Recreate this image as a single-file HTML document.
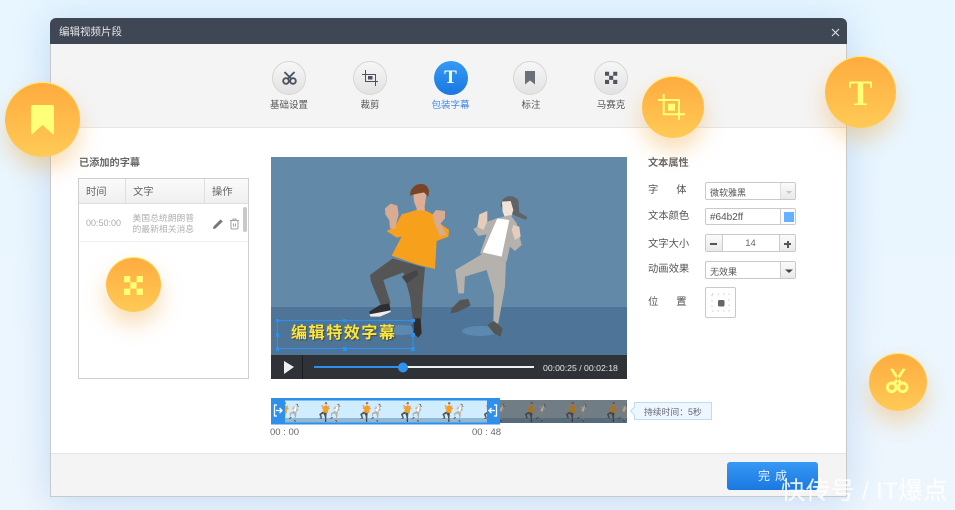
<!DOCTYPE html>
<html>
<head>
<meta charset="utf-8">
<style>
html,body{margin:0;padding:0}
body{width:955px;height:510px;position:relative;overflow:hidden;background:linear-gradient(180deg,#e7f6ff 0%,#ecf6fe 70%,#eef6fd 100%);font-family:"Liberation Sans","Noto Sans CJK SC",sans-serif;color:#555}
.a{position:absolute;white-space:nowrap}
#win{position:absolute;left:50px;top:18px;width:797px;height:479px;border-radius:6px 6px 3px 3px;background:#fff;box-shadow:0 4px 36px rgba(110,160,220,.32)}
#frame{position:absolute;left:50px;top:44px;width:795px;height:452px;border:1px solid #c8c9cb;border-top:0;pointer-events:none}
.tool{position:absolute;top:61px;width:32px;height:32px;border:1px solid #d6d6d6;border-radius:50%;background:linear-gradient(180deg,#f7f7f7,#e2e2e2)}
.tool svg,.bd svg{position:absolute;left:0;top:0;width:100%;height:100%}
.tl{position:absolute;top:98.5px;width:80px;text-align:center;font-size:9.5px;line-height:14px;color:#555}
.bd{position:absolute;border-radius:50%;background:linear-gradient(180deg,#ffab3f,#ffca55);box-shadow:inset 0 1px 0 #fff06a,0 12px 22px rgba(240,165,60,.38)}
.lb{position:absolute;left:648px;font-size:10.3px;line-height:14px;color:#555}
.inp{position:absolute;left:705px;width:89px;height:16px;border:1px solid #c9c9c9;border-radius:2px;background:#fff;font-size:9px;line-height:16px;color:#555}
.inp i{font-style:normal;position:absolute;left:4px;top:1.5px}
.sb{position:absolute;top:0;bottom:0;background:linear-gradient(180deg,#fbfbfb,#e9e9e9)}
.h{position:absolute;width:3.5px;height:3.5px;background:#2e8fec}
</style>
</head>
<body>
<div id="win"></div>
<div class="a" style="left:51px;top:44px;width:795px;height:83px;background:#f4f4f4;border-bottom:1px solid #e6e6e6"></div>
<div class="a" style="left:51px;top:453px;width:795px;height:43px;background:#f4f4f4;border-top:1px solid #e6e6e6"></div>
<div id="frame"></div>
<div class="a" style="left:50px;top:18px;width:797px;height:26px;background:#3f4654;border-radius:6px 6px 0 0"></div>
<div class="a" style="left:59px;top:24.5px;font-size:10.5px;line-height:15px;color:#e6e7e9">编辑视频片段</div>
<svg class="a" style="left:830.5px;top:27.5px" width="9" height="9" viewBox="0 0 9 9"><path d="M1 1L8 8M8 1L1 8" stroke="#dcdcdc" stroke-width="1.2"/></svg>

<div class="tool" style="left:272px"><svg viewBox="0 0 32 32"><g fill="none" stroke="#4a5260" stroke-width="1.900"><circle cx="13" cy="19" r="2.800"/><circle cx="20" cy="19" r="2.800"/><path d="M11.500 10L18.500 17M21.500 10L14.500 17"/></g></svg></div>
<div class="tool" style="left:353px"><svg viewBox="0 0 32 32"><g fill="none" stroke="#4a5260" stroke-width="1"><path d="M11.500 8V19.500H24M8 12.500H21.500V24"/></g><rect x="14" y="14" width="4.500" height="3.500" fill="#4a5260"/></svg></div>
<div class="a" style="left:433.5px;top:61px;width:34px;height:34px;border-radius:50%;background:linear-gradient(180deg,#359af6,#1a78e0)"></div>
<div class="a" style="left:433.5px;top:63.5px;width:34px;text-align:center;font:bold 19px/28px 'Liberation Serif',serif;color:#fff">T</div>
<div class="tool" style="left:513px"><svg viewBox="0 0 32 32"><path d="M11 9H21V22.500L16 18.500L11 22.500Z" fill="#6b7078"/></svg></div>
<div class="tool" style="left:594px"><svg viewBox="0 0 32 32"><path d="M10 9.700h4.100v4.100H10zM18.200 9.700h4.100v4.100h-4.100zM14.100 13.800h4.100v4.100h-4.100zM10 17.900h4.100V22H10zM18.200 17.900h4.100V22h-4.100z" fill="#4f5560"/></svg></div>
<div class="tl" style="left:249px">基础设置</div>
<div class="tl" style="left:330px">裁剪</div>
<div class="tl" style="left:410.5px;color:#3f8ae6">包装字幕</div>
<div class="tl" style="left:491px">标注</div>
<div class="tl" style="left:571px">马赛克</div>

<div class="a" style="left:79px;top:155.5px;font-size:10.2px;line-height:15px;font-weight:bold;color:#666">已添加的字幕</div>
<div class="a" style="left:78px;top:178px;width:169px;height:199px;border:1px solid #cfcfcf;background:#fff"></div>
<div class="a" style="left:79px;top:179px;width:169px;height:24px;background:linear-gradient(180deg,#fbfbfb,#efefef);border-bottom:1px solid #dedede"></div>
<div class="a" style="left:125px;top:179px;width:1px;height:24px;background:#dedede"></div>
<div class="a" style="left:204px;top:179px;width:1px;height:24px;background:#dedede"></div>
<div class="a" style="left:86px;top:185px;font-size:10.3px;line-height:15px;color:#666">时间</div>
<div class="a" style="left:133px;top:185px;font-size:10.3px;line-height:15px;color:#666">文字</div>
<div class="a" style="left:212px;top:185px;font-size:10.3px;line-height:15px;color:#666">操作</div>
<div class="a" style="left:86px;top:216px;font-size:9px;line-height:14px;color:#aaa">00:50:00</div>
<div class="a" style="left:132.5px;top:212.5px;font-size:8.8px;line-height:11px;color:#b0b0b0">美国总统朗朗普<br>的最新相关消息</div>
<div class="a" style="left:79px;top:241px;width:169px;height:1px;background:#f0f0f0"></div>
<div class="a" style="left:243px;top:207px;width:4px;height:25px;border-radius:2px;background:#c9c9c9"></div>
<svg class="a" style="left:211.500px;top:218px" width="12" height="12" viewBox="0 0 12 12"><path d="M1 11L1.500 8.500L8.500 1.500L10.800 3.500L3.500 10.500Z" fill="#777"/></svg>
<svg class="a" style="left:229px;top:217.500px" width="11" height="12" viewBox="0 0 11 12"><path d="M1 2.500H10M4 2.500V1H7V2.500M2 2.500V10Q2 11 3 11H8Q9 11 9 10V2.500M4.500 5.500V8.500M6.500 5.500V8.500" fill="none" stroke="#888" stroke-width=".8"/></svg>

<svg class="a" style="left:0;top:0" width="955" height="510" viewBox="0 0 955 510">
<defs>
<g id="d">
<path d="M368 310L300 360L303 380L332 450L362 445L340 375L400 352L420 425L428 492L455 490L458 415L465 338Z" fill="#555"/>
<path d="M395 365L440 345L445 360L410 385Z" fill="#454545"/>
<path d="M298 470L330 450L358 445L362 468L330 480L300 482Z" fill="#2f2f2f"/>
<path d="M298 478L362 466V471L330 485H302Z" fill="#eee"/>
<path d="M425 510L435 490H452L455 535L445 548L430 535Z" fill="#2f2f2f"/>
<path d="M430 112H470L464 155L465 175H440V160L432 140Z" fill="#dcae96"/>
<path d="M421 122C416 88 470 70 477 108L475 126L462 112L432 118Z" fill="#7a4428"/>
<path d="M395 178L440 165L470 168L492 180L510 205L537 225L535 245L500 258L495 342L440 328L365 302L395 245L380 248L350 228L375 215Z" fill="#f7a01f"/>
<path d="M358 196L346 178L345 160L362 146L382 152L386 178L375 222L360 220Z" fill="#d9ab92"/>
<path d="M488 178L498 165L525 168L525 190L512 205L528 240L510 243L492 200Z" fill="#d9ab92"/>
<path d="M692 155C690 125 725 112 745 135L748 172L772 186L768 195L735 182L725 175Z" fill="#5f6468"/>
<path d="M696 140L722 138L730 165L722 190H706L698 170Z" fill="#f0e3d8"/>
<path d="M680 190L722 180L740 205L755 270L735 288L720 275L710 320L630 295L650 238L625 243L610 222L640 205Z" fill="#b5b1ad"/>
<path d="M682 190L718 195L695 305L638 292Z" fill="#fff"/>
<path d="M622 215L628 178L652 168L652 200L640 225Z" fill="#e6ccba"/>
<path d="M725 225L730 210L748 215L752 245L735 255Z" fill="#e6ccba"/>
<path d="M640 295L556 345L565 415L582 415L585 365L650 345L672 420L670 505L685 505L705 395L708 320Z" fill="#b5b1ad"/>
<path d="M545 460L570 435L595 432L602 452L560 472L542 475Z" fill="#555"/>
<path d="M652 510L672 498L698 520L692 545L672 535Z" fill="#555"/>
</g>
<clipPath id="c1"><rect x="285" y="400" width="202" height="23"/></clipPath>
<clipPath id="c2"><rect x="500" y="400" width="127" height="23"/></clipPath>
<filter id="b"><feGaussianBlur stdDeviation=".35"/></filter>
</defs>
<rect x="271" y="157" width="356" height="150" fill="#628aa8"/>
<rect x="271" y="307" width="356" height="48" fill="#4e7497"/>
<ellipse cx="400" cy="330" rx="20" ry="5" fill="#5c89b0"/>
<ellipse cx="480" cy="331" rx="18" ry="5" fill="#5c89b0"/>
<g transform="translate(270 155) scale(.3333)" filter="url(#b)"><use href="#d"/></g>
<rect x="271" y="355" width="356" height="24" fill="#2f3237"/>
<rect x="302" y="355" width="1" height="24" fill="#1c1e21"/>
<path d="M284 361L294 367L284 374Z" fill="#eee"/>
<rect x="314" y="366" width="220" height="2" fill="#f0f0f0"/>
<rect x="314" y="366" width="89" height="2" fill="#2f8fec"/>
<circle cx="403" cy="367.500" r="5" fill="#2f92ee"/>

<rect x="277.500" y="320.500" width="135.500" height="28" fill="none" stroke="#2e8fec" stroke-width="1"/>

<rect x="285" y="400" width="202" height="18" fill="#d0ecff"/>
<rect x="285" y="418" width="202" height="5" fill="#8fb9d4"/>
<g clip-path="url(#c1)">
<use href="#d" transform="translate(264.500 398.500) scale(.045 .043)"/>
<use href="#d" transform="translate(305.800 398.500) scale(.045 .043)"/>
<use href="#d" transform="translate(346.800 398.500) scale(.045 .043)"/>
<use href="#d" transform="translate(387.500 398.500) scale(.045 .043)"/>
<use href="#d" transform="translate(429 398.500) scale(.045 .043)"/>
<use href="#d" transform="translate(470.500 398.500) scale(.045 .043)"/>
</g>
<rect x="500" y="400" width="127" height="18" fill="#9fb4c2"/>
<rect x="500" y="418" width="127" height="5" fill="#6f93b0"/>
<g clip-path="url(#c2)">
<use href="#d" transform="translate(470.500 398.500) scale(.045 .043)"/>
<use href="#d" transform="translate(511.500 398.500) scale(.045 .043)"/>
<use href="#d" transform="translate(552.500 398.500) scale(.045 .043)"/>
<use href="#d" transform="translate(593.500 398.500) scale(.045 .043)"/>
</g>
<rect x="500" y="400" width="127" height="23" fill="#333" fill-opacity=".42"/>
<path d="M271 398H500V424.500H271ZM285 400.500V422.500H487V400.500Z" fill="#2f8fec" fill-rule="evenodd"/>
<path d="M277 405H274.500V416H277M276 410.500H282M279.500 408L282 410.500L279.500 413M494 405H496.500V416H494M495 410.500H489M491.500 408L489 410.500L491.500 413" fill="none" stroke="#fff" stroke-width="1.300"/>
<path d="M630.500 411L634.500 407V402.500H711.500V419.500H634.500V415Z" fill="#eef7ff" stroke="#bcdcf6"/>
</svg>
<div class="h" style="left:275.500px;top:318.500px"></div><div class="h" style="left:343px;top:318.500px"></div><div class="h" style="left:411px;top:318.500px"></div>
<div class="h" style="left:275.500px;top:333px"></div><div class="h" style="left:411px;top:333px"></div>
<div class="h" style="left:275.500px;top:347px"></div><div class="h" style="left:343px;top:347px"></div><div class="h" style="left:411px;top:347px"></div>
<div class="a" style="left:291px;top:322px;font-size:16px;line-height:23px;font-weight:bold;letter-spacing:1.600px;color:#ffe534;text-shadow:1px 1px 1px rgba(40,40,40,.55)">编辑特效字幕</div>
<div class="a" style="left:543px;top:360.500px;font-size:8.700px;line-height:14px;color:#e6e6e6">00:00:25 / 00:02:18</div>
<div class="a" style="left:270px;top:426px;font-size:9.500px;line-height:14px;color:#666">00 : 00</div>
<div class="a" style="left:472px;top:426px;font-size:9.500px;line-height:14px;color:#666">00 : 48</div>
<div class="a" style="left:644px;top:404.500px;font-size:8.800px;line-height:14px;color:#667">持续时间：5秒</div>

<div class="a" style="left:648px;top:155.500px;font-size:10.200px;line-height:15px;font-weight:bold;color:#666">文本属性</div>
<div class="lb" style="top:184px">字<span style="display:inline-block;width:18px"></span>体</div>
<div class="lb" style="top:210px">文本颜色</div>
<div class="lb" style="top:237.500px">文字大小</div>
<div class="lb" style="top:263px">动画效果</div>
<div class="lb" style="top:296px">位<span style="display:inline-block;width:18px"></span>置</div>
<div class="inp" style="top:182px"><i>微软雅黑</i><div class="sb" style="left:74px;right:0;border-left:1px solid #ddd"></div><svg class="a" style="left:79px;top:6.500px" width="8" height="5"><path d="M1 1H7L4 4Z" fill="#c5c5c5"/></svg></div>
<div class="inp" style="top:208px;height:15px"><i style="font-size:10px;top:.5px">#64b2ff</i><div class="sb" style="left:74px;right:0;border-left:1px solid #ccc;background:#fafafa"></div><div class="a" style="left:78px;top:3px;width:10px;height:10px;background:#64b2ff"></div></div>
<div class="inp" style="top:234px"><div class="sb" style="left:0;width:16px;border-right:1px solid #ccc"></div><div class="a" style="left:4px;top:8px;width:7px;height:1.500px;background:#555"></div><div class="a" style="left:0;width:89px;text-align:center;top:1px;color:#666;font-size:9.500px">14</div><div class="sb" style="right:0;width:15px;border-left:1px solid #ccc"></div><div class="a" style="left:78px;top:8px;width:7px;height:2px;background:#555"></div><div class="a" style="left:80.500px;top:5.500px;width:2px;height:7px;background:#555"></div></div>
<div class="inp" style="top:261px"><i>无效果</i><div class="sb" style="left:74px;right:0;border-left:1px solid #ccc"></div><svg class="a" style="left:79px;top:6.500px" width="8" height="5"><path d="M0 .5H8L4 4Z" fill="#444"/></svg></div>
<div class="a" style="left:705px;top:287px;width:29px;height:29px;border:1px solid #c9c9c9;border-radius:2px;background:#fff"></div>
<svg class="a" style="left:711px;top:293px" width="20" height="20"><rect x="1" y="1" width="17" height="17" fill="none" stroke="#ccc" stroke-dasharray="1.500 4"/><rect x="7" y="7" width="6.500" height="6.500" rx="1.500" fill="#666"/></svg>

<div class="a" style="left:727px;top:462px;width:91px;height:28px;border-radius:3px;background:linear-gradient(180deg,#3798f5,#1a78e0);color:#e8f3ff;font-size:12px;line-height:28px;letter-spacing:5px;box-sizing:border-box;padding-left:31px">完成</div>

<div class="bd" style="left:5px;top:82px;width:75px;height:75px"><svg viewBox="0 0 75 75"><path d="M26 25Q26 23 28 23H47Q49 23 49 25V51Q49 53 47.500 52L37.500 43L27.500 52Q26 53 26 51Z" fill="#ffff78"/></svg></div>
<div class="bd" style="left:642px;top:76px;width:62px;height:62px"><svg viewBox="0 0 62 62"><g fill="none" stroke="#ffff78" stroke-width="2"><path d="M21.700 18V38.300H43M16 24H37V44"/></g><rect x="26" y="27.700" width="7" height="7" fill="#ffff78"/></svg></div>
<div class="bd" style="left:825px;top:56px;width:71px;height:72px;text-align:center;color:#ffff78;font:bold 36px/74px 'Liberation Serif',serif">T</div>
<div class="bd" style="left:105.500px;top:257px;width:55px;height:55px"><svg viewBox="0 0 55 55"><path d="M18 19h6.300v6.300H18zM30.600 19h6.300v6.300h-6.300zM24.300 25.300h6.300v6.300h-6.300zM18 31.600h6.300v6.300H18zM30.600 31.600h6.300v6.300h-6.300z" fill="#ffff78"/></svg></div>
<div class="bd" style="left:869px;top:353px;width:58px;height:58px"><svg viewBox="0 0 58 58"><g fill="none" stroke="#ffff78" stroke-width="3"><circle cx="22.700" cy="34.300" r="4.300"/><circle cx="33.700" cy="34.300" r="4.300"/></g><path d="M21 16L24 15.500L33 29.500L30.500 31ZM36.700 16L33.700 15.500L24.500 29.500L27 31Z" fill="#ffff78"/></svg></div>

<div class="a" style="left:781px;top:475px;font-size:24.500px;line-height:34px;letter-spacing:.2px;color:rgba(255,255,255,.88)">快传号 / IT爆点</div>
</body>
</html>
